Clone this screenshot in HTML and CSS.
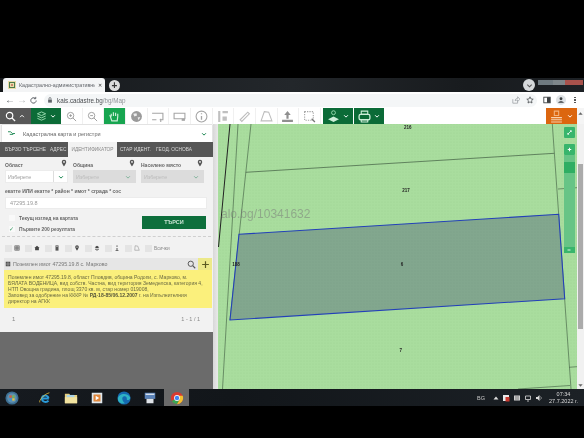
FILE: index.html
```html
<!DOCTYPE html>
<html lang="bg">
<head>
<meta charset="utf-8">
<title>Кадастрално-административна информационна система</title>
<link rel="stylesheet" href="styles.css">
</head>
<body>
<div class="screen">
  <div class="black-top"></div>

  <div class="tabstrip">
    <div class="tab">
      <svg class="favicon" viewBox="0 0 8 8"><rect width="8" height="8" fill="#e8dca8"/><rect x="1.5" y="1.5" width="5" height="5" fill="none" stroke="#4b7a4b"/><path d="M3 4h2" stroke="#a33"/></svg>
      <span class="tab-title">Кадастрално-административни</span>
      <span class="tab-x">✕</span>
    </div>
    <span class="newtab">+</span>
    <span class="grow"></span>
    <span class="tabmenu"><svg viewBox="0 0 8 8" class="ic5"><path d="M1.5 3 4 5.5 6.5 3" fill="none" stroke="#555" stroke-width="1.2"/></svg></span>
    <div class="winctl"><i class="wc-min"></i><i class="wc-max"></i><i class="wc-close"></i></div>
  </div>

  <div class="addrbar">
    <span class="nav">←</span><span class="nav dim">→</span>
    <svg class="navsvg" viewBox="0 0 10 10"><path d="M8 5a3 3 0 1 1-1-2.3M7.5 1v2h-2" fill="none" stroke="#5f6368" stroke-width="1.1"/></svg>
    <div class="omnibox">
      <svg class="lock" viewBox="0 0 8 8"><rect x="1.5" y="3.5" width="5" height="4" fill="#5f6368"/><path d="M2.7 3.5V2a1.3 1.3 0 0 1 2.6 0v1.5" fill="none" stroke="#5f6368"/></svg>
      <span class="url">kais.cadastre.bg<span class="url-path">/bg/Map</span></span>
      <span class="grow"></span>
      <svg class="omni-ic" viewBox="0 0 10 10"><path d="M1 4v5h6V7M4 6c0-2 1-3 3-3V1l3 3-3 3V5C5.500 5 4.500 5.300 4 6" fill="none" stroke="#8a8f94" stroke-width=".8"/></svg>
      <svg class="omni-ic" viewBox="0 0 10 10"><path d="m5 1 1.200 2.700 2.800.3-2.100 1.900.6 2.900L5 7.300 2.500 8.800l.6-2.900L1 4l2.800-.3z" fill="none" stroke="#3c4043" stroke-width=".9"/></svg>
    </div>
    <svg class="chrome-ic" viewBox="0 0 10 10"><rect x="1" y="1.500" width="8" height="7" fill="none" stroke="#3c4043" stroke-width="1.100"/><rect x="5" y="1.500" width="4" height="7" fill="#3c4043"/></svg>
    <span class="avatar"><svg viewBox="0 0 10 10"><circle cx="5" cy="3.500" r="1.800" fill="#3c4043"/><path d="M1.500 8.500c.5-2.500 6.500-2.500 7 0z" fill="#3c4043"/></svg></span>
    <span class="kebab"><i></i><i></i><i></i></span>
  </div>

  <div class="toolbar">
    <div class="tb-search">
      <svg class="tb-ic" viewBox="0 0 12 12"><circle cx="5" cy="5" r="3.500" fill="none" stroke="#fff" stroke-width="1.300"/><path d="m7.500 7.500 3.500 3.500" stroke="#fff" stroke-width="1.500"/></svg>
      <svg class="chev" viewBox="0 0 8 8"><path d="M1.500 5.500 4 3l2.500 2.500" fill="none" stroke="#fff" stroke-width="1.300"/></svg>
    </div>
    <div class="tb-green tb-layers">
      <svg class="tb-ic" viewBox="0 0 12 12"><g fill="none" stroke="#9fe0b5" stroke-width="1"><path d="M6 1 10.500 3 6 5 1.500 3z"/><path d="M1.500 5.500 6 7.500l4.500-2"/><path d="M1.500 8 6 10l4.500-2"/></g></svg>
      <svg class="chev" viewBox="0 0 8 8"><path d="M1.500 3 4 5.500 6.500 3" fill="none" stroke="#fff" stroke-width="1.300"/></svg>
    </div>
    <div class="cell"><svg class="tb-ic" viewBox="0 0 12 12"><circle cx="5" cy="5" r="3.500" fill="none" stroke="#999"/><path d="m7.500 7.500 3.500 3.500M3.500 5h3M5 3.500v3" stroke="#999"/></svg></div>
    <div class="cell"><svg class="tb-ic" viewBox="0 0 12 12"><circle cx="5" cy="5" r="3.500" fill="none" stroke="#999"/><path d="m7.500 7.500 3.500 3.500M3.500 5h3" stroke="#999"/></svg></div>
    <div class="cell active"><svg class="tb-ic big" viewBox="0 0 12 12"><path d="M3 6V3.500M5 5.500V2M7 5.500V2.500M9 6V3.500M3 6 2 5.500 3.500 10h5L9 6" fill="none" stroke="#cdeed8" stroke-width="1.100"/></svg></div>
    <div class="cell"><svg class="tb-ic big" viewBox="0 0 12 12"><circle cx="6" cy="6" r="5" fill="#9a9a9a"/><path d="M3 3.500 6 3l.5 2-2.500 1zM7 7l2.500-.5L8 9.500z" fill="#ededed"/></svg></div>
    <div class="cell"><svg class="tb-ic big" viewBox="0 0 12 12"><path d="M1 3h10v6H8M5 9H1zM9 8v3" fill="none" stroke="#a5a5a5"/></svg></div>
    <div class="cell"><svg class="tb-ic big" viewBox="0 0 12 12"><path d="M1 3h10v5H1z" fill="none" stroke="#a5a5a5"/><path d="M8 8h3v2H8z" fill="#a5a5a5"/></svg></div>
    <div class="cell"><svg class="tb-ic big" viewBox="0 0 12 12"><circle cx="6" cy="6" r="5" fill="none" stroke="#a5a5a5"/><path d="M6 3v1M6 5.500V9" stroke="#a5a5a5" stroke-width="1.200"/></svg></div>
    <div class="cell"><svg class="tb-ic big" viewBox="0 0 12 12"><path d="M2 1h2v10H2zM6 1h5v2H6zM6 6h4v4H6z" fill="#c0c0c0"/></svg></div>
    <div class="cell"><svg class="tb-ic big" viewBox="0 0 12 12"><path d="m2 9 7-7 1.500 1.500-7 7z" fill="none" stroke="#bdbdbd"/></svg></div>
    <div class="cell"><svg class="tb-ic big" viewBox="0 0 12 12"><path d="M4 1.500 8 2l3 8H1z" fill="none" stroke="#bdbdbd"/></svg></div>
    <div class="cell"><svg class="tb-ic big" viewBox="0 0 12 12"><path d="M6 1 9 4.500H7V8H5V4.500H3zM1 9h10v2H1z" fill="#8f8f8f"/></svg></div>
    <div class="cell"><svg class="tb-ic big" viewBox="0 0 12 12"><path d="M1.500 1.500h8v8h-8z" fill="none" stroke="#a5a5a5" stroke-dasharray="1.200 1"/><path d="m8 8 3 3" stroke="#777" stroke-width="1.200"/></svg></div>
    <div class="tb-gap"></div>
    <div class="tb-green tb-map">
      <svg class="tb-ic big" viewBox="0 0 12 12"><circle cx="6" cy="2.500" r="1.800" fill="none" stroke="#9fe0b5" stroke-width=".8"/><path d="M6 6 11 8.500 6 11 1 8.500z" fill="#cdeed8"/></svg>
      <svg class="chev" viewBox="0 0 8 8"><path d="M1.500 3 4 5.500 6.500 3" fill="none" stroke="#fff" stroke-width="1.300"/></svg>
    </div>
    <div class="tb-green tb-print">
      <svg class="tb-ic big" viewBox="0 0 12 12"><path d="M3 1h6v3H3zM3 9h6v2H3z" fill="none" stroke="#cdeed8"/><rect x="1" y="4" width="10" height="5" rx="1.500" fill="none" stroke="#cdeed8" stroke-width="1.200"/></svg>
      <svg class="chev" viewBox="0 0 8 8"><path d="M1.500 3 4 5.500 6.500 3" fill="none" stroke="#fff" stroke-width="1.300"/></svg>
    </div>
    <span class="grow"></span>
    <div class="tb-orange">
      <svg class="tb-ic big" viewBox="0 0 12 12"><path d="M4 1h4v4H4z" fill="none" stroke="#f2b27e"/><path d="M1 7h10M1 9h10M1 11h10" stroke="#f6d2b0"/></svg>
      <svg class="chev" viewBox="0 0 8 8"><path d="M1.500 3 4 5.500 6.500 3" fill="none" stroke="#fff" stroke-width="1.300"/></svg>
    </div>
    <div class="tb-end"><svg class="ic5" viewBox="0 0 8 8"><path d="m4 2.500 2.500 3h-5z" fill="#666"/></svg></div>
  </div>

  <div class="main">
    <aside class="side">
      <div class="panel">
        <div class="card">
          <svg class="card-ic" viewBox="0 0 10 8"><path d="M1 2h3l2 2h3M3 5h4" fill="none" stroke="#12824a" stroke-width="1"/></svg>
          <span class="card-title">Кадастрална карта и регистри</span>
          <svg class="card-chev" viewBox="0 0 8 8"><path d="M1.500 3 4 5.500 6.500 3" fill="none" stroke="#12824a" stroke-width="1.300"/></svg>
        </div>
        <div class="tabs">
          <span class="t t1">БЪРЗО ТЪРСЕНЕ</span>
          <span class="t t2">АДРЕС</span>
          <span class="t t3">ИДЕНТИФИКАТОР</span>
          <span class="t t4">СТАР ИДЕНТ.</span>
          <span class="t t5">ГЕОД. ОСНОВА</span>
        </div>
        <div class="form">
          <div class="fields">
            <div class="field">
              <div class="lbl-row"><span class="lbl">Област</span><svg class="pin" viewBox="0 0 8 10"><path d="M4 .5a3 3 0 0 1 3 3C7 5.500 4 9.500 4 9.500S1 5.500 1 3.500a3 3 0 0 1 3-3z" fill="#555"/><circle cx="4" cy="3.500" r="1.200" fill="#f1f1f1"/></svg></div>
              <div class="sel"><span class="sel-v">Изберете</span><span class="sel-b"><svg viewBox="0 0 8 8"><path d="M1.500 3 4 5.500 6.500 3" fill="none" stroke="#12824a" stroke-width="1.300"/></svg></span></div>
            </div>
            <div class="field">
              <div class="lbl-row"><span class="lbl">Община</span><svg class="pin" viewBox="0 0 8 10"><path d="M4 .5a3 3 0 0 1 3 3C7 5.500 4 9.500 4 9.500S1 5.500 1 3.500a3 3 0 0 1 3-3z" fill="#555"/><circle cx="4" cy="3.500" r="1.200" fill="#f1f1f1"/></svg></div>
              <div class="sel off"><span class="sel-v">Изберете</span><span class="sel-b"><svg viewBox="0 0 8 8"><path d="M1.500 3 4 5.500 6.500 3" fill="none" stroke="#7fb39a" stroke-width="1.300"/></svg></span></div>
            </div>
            <div class="field">
              <div class="lbl-row"><span class="lbl">Населено място</span><svg class="pin" viewBox="0 0 8 10"><path d="M4 .5a3 3 0 0 1 3 3C7 5.500 4 9.500 4 9.500S1 5.500 1 3.500a3 3 0 0 1 3-3z" fill="#555"/><circle cx="4" cy="3.500" r="1.200" fill="#f1f1f1"/></svg></div>
              <div class="sel off"><span class="sel-v">Изберете</span><span class="sel-b"><svg viewBox="0 0 8 8"><path d="M1.500 3 4 5.500 6.500 3" fill="none" stroke="#7fb39a" stroke-width="1.300"/></svg></span></div>
            </div>
          </div>
          <div class="lbl id-lbl">екатте ИЛИ екатте * район * имот * сграда * сос</div>
          <div class="input">47295.19.8</div>
          <div class="opts">
            <div class="checks">
              <div class="check"><span class="box"></span><span>Текущ изглед на картата</span></div>
              <div class="check"><span class="box tick">✓</span><span>Първите 200 резултата</span></div>
            </div>
            <div class="search-btn">ТЪРСИ</div>
          </div>
        </div>
        <div class="dash"></div>
        <div class="filters">
          <span class="fb"></span><svg class="fi" viewBox="0 0 8 8"><path d="M1 1h6v6H1zM1 3h6M1 5h6M3 1v6M5 1v6" fill="none" stroke="#555" stroke-width=".8"/></svg>
          <span class="fb"></span><svg class="fi" viewBox="0 0 8 8"><path d="M4 1 7.500 4H6.500v3h-5V4H.5z" fill="#444"/></svg>
          <span class="fb"></span><svg class="fi" viewBox="0 0 8 8"><path d="M2 .5h4v7H2z" fill="#555"/><path d="M3 2h2" stroke="#ddd"/></svg>
          <span class="fb"></span><svg class="fi" viewBox="0 0 8 10"><path d="M4 .5a3 3 0 0 1 3 3C7 5.500 4 9.500 4 9.500S1 5.500 1 3.500a3 3 0 0 1 3-3z" fill="#444"/><circle cx="4" cy="3.500" r="1.200" fill="#eee"/></svg>
          <span class="fb"></span><svg class="fi" viewBox="0 0 8 8"><path d="M4 1 7 3 4 4.500 1 3z" fill="#444"/><path d="M1.500 4.500 4 6l2.500-1.500V6L4 7.500 1.500 6z" fill="#666"/></svg>
          <span class="fb"></span><svg class="fi" viewBox="0 0 8 8"><path d="M4 .5v2M4 4v3.500" stroke="#444" stroke-width="1.200"/><path d="M2 7.500h4" stroke="#444"/></svg>
          <span class="fb"></span><svg class="fi" viewBox="0 0 8 8"><path d="M1.500 1 5 1.500 7 7H1z" fill="none" stroke="#888" stroke-width=".7"/></svg>
          <span class="fb"></span><span class="all">Всички</span>
        </div>
        <div class="result">
          <div class="res-head">
            <svg class="fi" viewBox="0 0 8 8"><path d="M1 1h6v6H1z" fill="#444"/><path d="M3 1v6M5 1v6M1 4h6" stroke="#ddd" stroke-width=".5"/></svg>
            <span class="res-title">Поземлен имот 47295.19.8 с. Марково</span>
            <svg class="res-ic" viewBox="0 0 12 12"><circle cx="5" cy="5" r="3.500" fill="none" stroke="#555" stroke-width="1.300"/><path d="m7.500 7.500 3.500 3.500" stroke="#555" stroke-width="1.500"/></svg>
            <span class="res-plus"><svg viewBox="0 0 12 12"><path d="M6 1.500v9M1.500 6h9" stroke="#5a5a22" stroke-width="1.600"/></svg></span>
          </div>
          <div class="res-body">
            <div class="ln">Поземлен имот 47295.19.8, област Пловдив, община Родопи, с. Марково, м.</div>
            <div class="ln">БЯЛАТА ВОДЕНИЦА, вид собств. Частна, вид територия Земеделска, категория 4,</div>
            <div class="ln">НТП Овощна градина, площ 3370 кв. м, стар номер 019008,</div>
            <div class="ln">Заповед за одобрение на КККР № <b>РД-18-85/06.12.2007</b> г. на Изпълнителния</div>
            <div class="ln">директор на АГКК</div>
          </div>
        </div>
        <div class="pager"><span>1</span><span class="pg-r">1 - 1 / 1</span></div>
      </div>
    </aside>
    <div class="gutter"></div>
    <div class="map">
      <svg class="map-svg" viewBox="218 124 359 265" preserveAspectRatio="none">
        <defs>
          <pattern id="dots" width="3" height="3" patternUnits="userSpaceOnUse">
            <rect width="3" height="3" fill="#a9dd9e"/>
            <circle cx="1" cy="1" r=".6" fill="#9fd494"/>
          </pattern>
          <pattern id="dots2" width="3" height="3" patternUnits="userSpaceOnUse">
            <rect width="3" height="3" fill="#82a78e"/>
            <circle cx="1" cy="1" r=".6" fill="#7a9f87"/>
          </pattern>
        </defs>
        <rect x="218" y="124" width="359" height="265" fill="url(#dots)"/>
        <path d="M230 124 218.500 247" stroke="#222" stroke-width="1" fill="none"/>
        <path d="M238 124 222.500 389" stroke="#4c6b4c" stroke-width=".7" fill="none"/>
        <path d="M251 124 230 320" stroke="#4c6b4c" stroke-width=".7" fill="none"/>
        <path d="M245.700 172.300 554.300 153.300" stroke="#4c6b4c" stroke-width=".8" fill="none"/>
        <path d="M552.300 124 571 389" stroke="#4c6b4c" stroke-width=".7" fill="none"/>
        <path d="M558 189 577 187.700M569 367.300 577 366.700M518 389 570 385.500" stroke="#4c6b4c" stroke-width=".7" fill="none"/>
        <polygon points="239,234.300 558.700,214.300 564.700,298.700 230,320" fill="url(#dots2)" stroke="#2340b8" stroke-width="1.100"/>
        <text class="m-label" x="407.700" y="129">216</text>
        <text class="m-label" x="406" y="192">217</text>
        <text class="m-label" x="236" y="266">188</text>
        <text class="m-label" x="402" y="266">6</text>
        <text class="m-label" x="400.700" y="352">7</text>
        <text class="m-mark" x="221" y="218">alo.bg/10341632</text>
      </svg>
      <div class="zoom">
        <span class="z-btn z-full"><svg viewBox="0 0 8 8"><path d="M2 6 6 2M4.500 2H6v1.500M2 4.500V6h1.500" fill="none" stroke="#fff" stroke-width=".9"/></svg></span>
        <span class="z-btn z-plus"><svg viewBox="0 0 8 8"><path d="M4 2v4M2 4h4" stroke="#fff" stroke-width="1.100"/></svg></span>
        <div class="z-track"><span class="z-thumb"></span><span class="grow"></span><span class="z-minus"><svg viewBox="0 0 8 8"><path d="M2 4h4" stroke="#fff" stroke-width="1.100"/></svg></span></div>
      </div>
    </div>
    <div class="scroll"><span class="thumb"></span><svg class="ic5" viewBox="0 0 8 8"><path d="m4 5.500 2.500-3h-5z" fill="#666"/></svg></div>
  </div>

  <div class="taskbar">
    <span class="tk orb"><svg viewBox="0 0 16 16"><circle cx="8" cy="8" r="7.500" fill="#3d6f92"/><circle cx="8" cy="8" r="5.500" fill="#5e8fb0"/><path d="M5 5h2.700v2.700H5z" fill="#d65b3a"/><path d="M8.300 5H11v2.700H8.300z" fill="#7cb84a"/><path d="M5 8.300h2.700V11H5z" fill="#3b93d6"/><path d="M8.300 8.300H11V11H8.300z" fill="#e8c33c"/></svg></span>
    <span class="tk ie"><svg viewBox="0 0 16 16"><path d="M12.500 8.500h-8c0-4 7-4.500 7.500 0M12 11c-2 2.500-7 2-7.500-2" fill="none" stroke="#2a9ad8" stroke-width="2.200"/><path d="M2 13c-1-2 4-9 11-11" fill="none" stroke="#e8c33c" stroke-width=".9"/></svg></span>
    <span class="tk folder"><svg viewBox="0 0 16 16"><path d="M1 3h5l1 1.500h8V14H1z" fill="#e7cf7c"/><path d="M1 7h14v7H1z" fill="#f2e3a0"/><path d="M3 4.500h9V7H3z" fill="#a9d2e6"/></svg></span>
    <span class="tk player"><svg viewBox="0 0 16 16"><rect x="2" y="2" width="12" height="12" fill="#dfe7ec"/><rect x="4" y="4" width="8" height="8" fill="#e0873c"/><path d="M6.500 5.500v5l4-2.500z" fill="#fff"/></svg></span>
    <span class="tk edge"><svg viewBox="0 0 16 16"><circle cx="8" cy="8" r="7.500" fill="#1569b0"/><path d="M1 9c.5-6 10-8 14-2 .5 2.500-2 4-4 3 1-3-1-4.500-3-4-3 .8-2.500 5 1 8-4.500 1-8-1.500-8-5z" fill="#2fb3c4"/><circle cx="10" cy="11" r="1.500" fill="#1569b0"/></svg></span>
    <span class="tk net"><svg viewBox="0 0 16 16"><rect x="2" y="2" width="12" height="7" fill="#5a82b8"/><rect x="3" y="3" width="10" height="1.500" fill="#e0e6ee"/><rect x="4" y="9" width="8" height="5" fill="#dfe3e8"/></svg></span>
    <span class="tk chrome"><svg viewBox="0 0 16 16"><circle cx="8" cy="8" r="7" fill="#d93a30"/><path d="M8 8 1.900 11.500A7 7 0 0 0 8 15l3.500-6z" fill="#3aa655"/><path d="M8 15a7 7 0 0 0 6.500-9.500H8L11.500 9z" fill="#f2c230"/><circle cx="8" cy="8" r="3.300" fill="#fff"/><circle cx="8" cy="8" r="2.500" fill="#4285f4"/></svg></span>
    <span class="grow"></span>
    <div class="tray">
      <span class="lang">BG</span>
      <svg class="tr-ic arrow" viewBox="0 0 8 8"><path d="m4 2.500 2.500 3h-5z" fill="#ddd"/></svg>
      <svg class="tr-ic" viewBox="0 0 8 8"><rect x="1" y="1" width="6" height="6" fill="#e8e8e8"/><rect x="3.500" y="3" width="4" height="4.500" fill="#c8382e"/></svg>
      <svg class="tr-ic" viewBox="0 0 8 8"><rect x="1" y="1.500" width="6" height="5" fill="#cfcfcf"/><path d="M2 3h4M2 5h4" stroke="#444" stroke-width=".6"/></svg>
      <svg class="tr-ic" viewBox="0 0 8 8"><path d="M1.500 2h5v3.500h-5zM3 7h2" fill="none" stroke="#ddd" stroke-width=".8"/></svg>
      <svg class="tr-ic" viewBox="0 0 8 8"><path d="M1 3h1.500L4.500 1v6L2.500 5H1z" fill="#ddd"/><path d="M5.500 2.500c1 1 1 2 0 3" fill="none" stroke="#ddd" stroke-width=".6"/></svg>
      <div class="clock"><span>07:34</span><span>27.7.2022 г.</span></div>
    </div>
  </div>
  <div class="black-bottom"></div>
</div>
</body>
</html>
```
FILE: styles.css
```css
* { box-sizing: border-box; }
html, body { margin: 0; padding: 0; background: #000; overflow: hidden; }
svg { display: block; }
.grow { flex: 1; }
.screen {
  width: 584px; height: 438px; display: flex; flex-direction: column;
  font-family: "Liberation Sans", Arial, sans-serif; color: #444;
  filter: blur(.45px); overflow: hidden;
}
.black-top { height: 78px; background: #000; }
.black-bottom { flex: 1; background: #000; }

.tabstrip { height: 14px; display: flex; align-items: center; padding-left: 3px;
  background: linear-gradient(90deg, #15181b, #23272b 50%, #181b1e 80%, #1d2125); }
.tab { width: 102px; height: 14px; background: #f3f4f5; border-radius: 3px 3px 0 0;
  display: flex; align-items: center; padding: 0 3px 0 5px; gap: 3px; }
.favicon { width: 8px; height: 8px; flex: none; }
.tab-title { font-size: 5.3px; color: #5f6368; white-space: nowrap; overflow: hidden; flex: 1; }
.tab-x { font-size: 5px; color: #333; }
.newtab { width: 11px; height: 11px; margin-left: 4px; border-radius: 50%; background: #dcdcdc;
  color: #333; font-size: 10px; line-height: 11px; text-align: center; font-weight: bold; }
.tabmenu { width: 12px; height: 12px; border-radius: 50%; background: #d5d8da; margin-right: 3px; display: flex; align-items: center; justify-content: center; }
.ic5 { width: 7px; height: 7px; }
.winctl { width: 45px; height: 5px; margin-right: 1px; align-self: flex-start; margin-top: 2px; display: flex; }
.winctl i { display: block; height: 5px; }
.wc-min { width: 15px; background: #6f7a80; }
.wc-max { width: 12px; background: #7e868a; }
.wc-close { flex: 1; background: #a8524c; }

.addrbar { height: 16px; background: #fff; display: flex; align-items: center; padding-left: 5px; }
.nav { width: 12px; font-size: 10px; line-height: 10px; color: #5f6368; }
.nav.dim { color: #b5b8bb; }
.navsvg { width: 9px; height: 9px; margin: 0 6px 0 0; }
.omnibox { flex: 1; height: 13px; background: #f4f6f7; border-radius: 7px; display: flex; align-items: center; padding: 0 3px; gap: 4px; }
.lock { width: 6px; height: 6px; }
.url { font-size: 6.300px; color: #4a4d50; }
.url-path { color: #8f9397; }
.omni-ic { width: 8px; height: 8px; margin-left: 2px; }
.chrome-ic { width: 8px; height: 8px; margin: 0 5px 0 6px; }
.avatar { width: 10px; height: 10px; background: #dfe3e6; border-radius: 50%; margin-right: 7px; padding: 1px; }
.kebab { width: 4px; margin-right: 7px; display: flex; flex-direction: column; align-items: center; gap: 1px; }
.kebab i { width: 1.500px; height: 1.500px; background: #555; display: block; }

.toolbar { height: 16px; background: #fff; display: flex; }
.tb-search { width: 31px; background: #585858; display: flex; align-items: center; padding-left: 5px; gap: 3px; }
.tb-green { background: #0b6b37; display: flex; align-items: center; justify-content: center; gap: 3px; }
.tb-layers { width: 30px; }
.tb-map, .tb-print { width: 30px; margin-right: 1px; }
.tb-ic { width: 11px; height: 11px; flex: none; }
.tb-ic.big { width: 13px; height: 13px; }
.chev { width: 6px; height: 6px; flex: none; }
.cell { width: 21.670px; border-right: 1px solid #f0f0f0; display: flex; align-items: center; justify-content: center; }
.cell.active { background: #17a550; }
.tb-gap { width: 2px; }
.tb-orange { width: 31px; background: #dc660f; display: flex; align-items: center; justify-content: center; gap: 4px; }
.tb-end { width: 7px; display: flex; justify-content: center; padding-top: 2px; background: #f5f5f5; }

.main { height: 265px; display: flex; background: #f0f0f0; }
.side { width: 213px; background: #6b6b6b; }
.panel { height: 208px; background: #f2f2f2; padding-top: 1px; }
.gutter { width: 5px; background: linear-gradient(90deg, #d8d8d8, #e9e9e9); }
.card { height: 17px; margin: 0 1px 0 2px; background: #fff; box-shadow: 0 0 1px #999; display: flex; align-items: center; padding: 0 5px; }
.card-ic { width: 9px; height: 7px; }
.card-title { font-size: 5.500px; color: #666; margin-left: 7px; flex: 1; }
.card-chev { width: 6px; height: 6px; }

.tabs { height: 15px; background: #565656; display: flex; align-items: center; }
.t { font-size: 4.800px; color: #d8d8d8; white-space: nowrap; }
.t1 { margin-left: 5px; width: 45px; }
.t2 { width: 18px; }
.t3 { width: 49px; height: 15px; line-height: 15px; background: #f2f2f2; color: #8a8a8a; text-align: center; }
.t4 { margin-left: 3px; width: 36px; }

.form { padding: 2px 8px 0 5px; }
.fields { display: flex; gap: 5px; }
.field { width: 63px; }
.lbl-row { height: 11px; display: flex; justify-content: space-between; align-items: center; }
.lbl { font-size: 5px; font-weight: bold; color: #666; }
.pin { width: 6px; height: 8px; margin-right: 1px; margin-top: -4px; }
.sel { height: 13px; background: #fff; display: flex; align-items: center; border: 1px solid #ececec; }
.sel-v { flex: 1; font-size: 5.300px; color: #999; padding-left: 2px; }
.sel-b { width: 14px; height: 100%; border-left: 1px solid #ddd; display: flex; align-items: center; justify-content: center; }
.sel-b svg { width: 6px; height: 6px; }
.sel.off { background: #dcdcdc; border-color: #dcdcdc; }
.sel.off .sel-b { border-left: 0; }
.sel.off .sel-v { color: #bbb; }
.id-lbl { height: 14px; line-height: 16px; }
.input { height: 12px; width: 202px; background: #fff; border: 1px solid #ececec; font-size: 5.500px; line-height: 10px; color: #999; padding-left: 4px; }
.opts { display: flex; height: 13px; margin-top: 7px; justify-content: space-between; width: 201px; }
.checks { display: flex; flex-direction: column; gap: 5px; margin-top: -1px; }
.check { height: 6px; display: flex; align-items: center; font-size: 4.900px; font-weight: bold; color: #666; gap: 4px; }
.box { width: 6px; height: 6px; margin-left: 4px; background: #f9f9f9; font-size: 6px; line-height: 6px; color: #3a9a64; font-weight: normal; }
.search-btn { width: 64px; height: 13px; background: #0e6f3c; color: #c7e3d2; font-size: 5.500px; font-weight: bold; line-height: 13px; text-align: center; }
.dash { margin: 7px 2px 0; border-top: 1px dashed #cfcfcf; }
.filters { height: 14px; margin-top: 4px; padding-left: 5px; display: flex; align-items: center; }
.fb { width: 7px; height: 7px; background: #e4e4e4; margin-right: 2px; }
.fi { width: 6px; height: 6px; margin-right: 5px; flex: none; }
.all { font-size: 4.800px; color: #888; }
.result { margin: 3px 1px 0 4px; }
.res-head { height: 12px; background: #e6e6e6; display: flex; align-items: center; padding-left: 1px; }
.res-head .fi { margin-right: 2px; }
.res-title { flex: 1; font-size: 5.300px; color: #777; }
.res-ic { width: 9px; height: 9px; margin-right: 2px; }
.res-plus { width: 14px; height: 12px; background: #ece98a; padding: 1.500px 2.500px; }
.res-body { height: 38px; background: #fbf07c; font-size: 5.050px; color: #6a6a42; padding: 4px 3px 0 4px; }
.ln { height: 6px; line-height: 6px; white-space: nowrap; }
.res-body b { color: #55553a; }
.pager { display: flex; justify-content: space-between; padding: 8px 13px 0 12px; font-size: 6px; color: #888; }
.pg-r { font-size: 5.500px; }

.map { width: 359px; position: relative; overflow: hidden; }
.map-svg { width: 359px; height: 265px; }
.m-label { font: bold 4.500px "Liberation Sans", sans-serif; fill: #222; text-anchor: middle; }
.m-mark { font: 12px "Liberation Sans", sans-serif; fill: #777; opacity: .5; }
.zoom { position: absolute; left: 345px; top: 3px; width: 12px; display: flex; flex-direction: column; align-items: center; }
.z-btn { width: 11px; height: 11px; background: #38b56c; border-radius: 1px; display: block; padding: 2px; }
.z-plus { margin-top: 6px; }
.z-track { width: 11px; height: 98px; background: #67c486; display: flex; flex-direction: column; }
.z-thumb { height: 11px; margin-top: 7px; background: #2fae63; }
.z-minus { height: 6px; background: #38b56c; display: block; }
.z-minus svg { width: 6px; height: 6px; margin: 0 auto; }

.scroll { flex: 1; background: #f1f1f1; display: flex; flex-direction: column; align-items: center; padding-top: 40px; }
.thumb { width: 5px; height: 167px; background: #ababab; }
.scroll .ic5 { margin-top: 53px; }

.taskbar { height: 17px; background: linear-gradient(90deg, #161a1f, #12161a 40%, #1c2126); display: flex; align-items: center; }
.tk { display: flex; height: 17px; align-items: center; justify-content: center; }
.tk svg { width: 14px; height: 14px; }
.orb { width: 23px; }
.ie { width: 14px; margin-left: 15px; }
.folder { width: 14px; margin-left: 12px; }
.player { width: 14px; margin-left: 12px; }
.edge { width: 14px; margin-left: 13px; }
.net { width: 14px; margin-left: 12px; }
.chrome { width: 25px; margin-left: 7px; background: #6a6a6a; }
.tray { display: flex; align-items: center; padding-right: 6px; }
.lang { font-size: 5.500px; color: #c5c5c5; margin-right: 7px; }
.tr-ic { width: 8px; height: 8px; margin-right: 3px; }
.arrow { margin-right: 2px; }
.clock { display: flex; flex-direction: column; align-items: center; font-size: 5.500px; line-height: 7px; color: #dcdcdc; margin-left: 3px; width: 29px; white-space: nowrap; }
```
